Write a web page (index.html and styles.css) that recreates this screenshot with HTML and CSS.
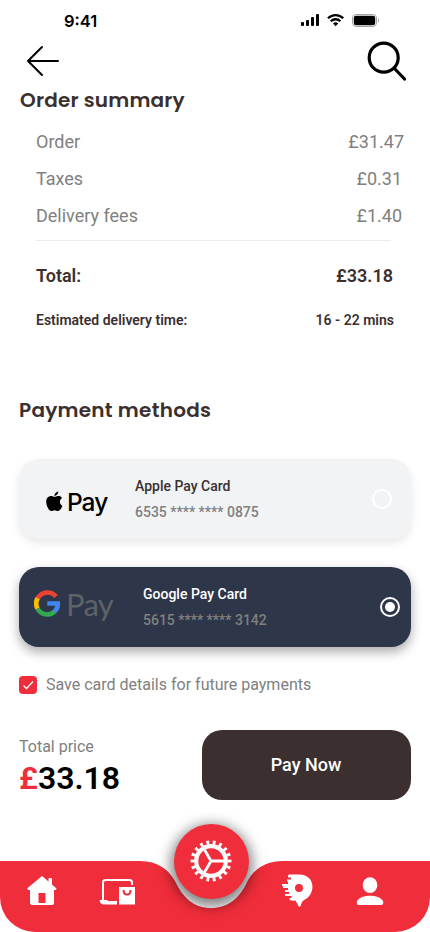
FILE: index.html
```html
<!DOCTYPE html>
<html lang="en">
<head>
<meta charset="utf-8">
<meta name="viewport" content="width=device-width, initial-scale=1">
<title>Order summary</title>
<link rel="stylesheet" href="styles.css">
</head>
<body>
<div class="screen">
  <header class="status">
    <span class="time">9:41</span>
    <svg class="status-icons" viewBox="0 0 79 14" width="79" height="14" aria-hidden="true">
      <rect x="1" y="9" width="3" height="4" rx="1"/><rect x="6" y="7" width="3" height="6" rx="1"/><rect x="11" y="4" width="3" height="9" rx="1"/><rect x="16" y="1" width="3" height="12" rx="1"/>
      <g fill="none" stroke="#000" stroke-width="2.3"><path d="M28 5.3a10.5 10.5 0 0 1 15.200 0"/><path d="M30.800 8.300a6.600 6.600 0 0 1 9.600 0"/></g>
      <path d="M33 10.600a3.700 3.700 0 0 1 5.200 0L35.600 13.200z"/>
      <rect x="52.500" y="1.500" width="24" height="12" rx="3.500" fill="none" stroke="#a5a5a5"/>
      <rect x="53.800" y="2.800" width="21.400" height="9.400" rx="2.300"/><path d="M78 5.500q1.300 .7 1.300 2t-1.300 2z" fill="#a5a5a5"/>
    </svg>
  </header>
  <nav class="toolbar">
    <svg width="34" height="32" viewBox="0 0 34 32" fill="none" stroke="#000" stroke-width="2" stroke-linecap="round" stroke-linejoin="round"><path d="M17 2 3 16l14 14M3 16h30"/></svg>
    <svg width="42" height="42" viewBox="0 0 42 42" fill="none" stroke="#000" stroke-width="3.200" stroke-linecap="round"><circle cx="17.700" cy="16.700" r="14.500"/><path d="m28.500 27.500 10 10.500"/></svg>
  </nav>
  <main>
    <h1 class="heading">Order summary</h1>
    <dl class="costs">
      <div class="row"><dt>Order</dt><dd class="order-cost">£31.47</dd></div>
      <div class="row"><dt>Taxes</dt><dd>£0.31</dd></div>
      <div class="row"><dt>Delivery fees</dt><dd>£1.40</dd></div>
    </dl>
    <div class="total"><span>Total:</span><span>£33.18</span></div>
    <div class="estimate"><span>Estimated delivery time:</span><span>16 - 22 mins</span></div>
    <h2 class="heading methods">Payment methods</h2>
    <section class="card apple">
      <div class="brand">
        <svg width="17" height="21" viewBox="0 0 17 21"><path d="M8.700 5.800C7.600 5.800 6.500 5 5 5 2.500 5 .2 7.200.2 10.700.2 14.300 2.700 20 5.200 20c1.200 0 1.900-.8 3.400-.8s2 .8 3.300.8c2 0 3.700-3 4.500-5.300-3.300-1.500-3.400-6-.3-7.800C14.900 5.300 13.500 5 12.400 5c-1.500 0-2.700.8-3.700.8zM8.400 4.900C8.300 2.600 10.200.6 12.300.4c.3 2.300-1.700 4.500-3.900 4.500z"/></svg>
        <span>Pay</span>
      </div>
      <div class="details"><strong>Apple Pay Card</strong><span>6535 **** **** 0875</span></div>
      <i class="radio"></i>
    </section>
    <section class="card google">
      <div class="brand">
        <svg width="26" height="27" viewBox="0 0 26 27" fill="none" stroke-width="4.700"><path stroke="#ea4335" d="M22 6.600A11 11 0 0 0 3.600 8.600"/><path stroke="#fbbc05" d="M3.600 8.200a11 11 0 0 0 0 10.500"/><path stroke="#34a853" d="M3.500 18.500a11 11 0 0 0 17.200 3.100"/><path stroke="#4285f4" d="M13.300 13.500h10.600q0 5.200-3.500 8.300"/></svg>
        <span>Pay</span>
      </div>
      <div class="details"><strong>Google Pay Card</strong><span>5615 **** **** 3142</span></div>
      <i class="radio checked"></i>
    </section>
    <div class="save"><span class="checkbox"><svg width="18" height="18" viewBox="0 0 18 18" fill="none" stroke="#fff" stroke-width="1.300"><path d="m4.500 9.500 3 3 6.500-7"/></svg></span><span>Save card details for future payments</span></div>
    <div class="checkout">
      <div class="price"><span>Total price</span><strong><b>£</b>33.18</strong></div>
      <button class="pay">Pay Now</button>
    </div>
  </main>
  <footer class="tabs">
    <svg class="bar" width="430" height="115" viewBox="0 0 430 115"><path fill="#f02d3a" d="M0 44H140C158 44 169 53 175 64 183 81 194 91 211 91 228 91 240 81 247 65 253 53 265 44 283 44H430v36a35 35 0 0 1-35 35H35A35 35 0 0 1 0 80z"/></svg>
    <div class="tab-icons">
      <svg class="home" width="30" height="30" viewBox="0 0 30 30"><path fill="#fff" fill-rule="evenodd" d="M15 0 0 12.500 1 14h2v13q0 2 2 2h20q2 0 2-2V14h2l.5-1.500L25 8.500V3q0-1-1-1h-1.500q-1 0-1 1v2.500zM11.500 17h7v10h-7z"/></svg>
      <svg class="shop" width="37" height="28" viewBox="0 0 37 28"><path d="M4 22V4.500Q4 2 6.500 2h24Q33 2 33 4.500V7" fill="none" stroke="#fff" stroke-width="2"/><path d="M.5 22H8l1 1h9v3.500H5Q1 26.500.5 22zM20 9H36v17.500H20z" fill="#fff"/><path d="M24.500 12q0 4.500 3.500 4.500t3.500-4.500" fill="none" stroke="#f02d3a" stroke-width="2"/></svg>
      <button class="settings" aria-label="Settings"><svg width="42" height="42" viewBox="-21 -21 42 42" fill="none" stroke="#fff"><circle r="14.800" stroke-width="4.200"/><circle r="18.500" stroke-width="4" pathLength="180" stroke-dasharray="4.400 5.600" stroke-dashoffset="2.200"/><path stroke-width="2.800" d="M0 0h15M0 0l-7.500-13M0 0l-7.500 13"/></svg></button>
      <svg class="delivery" width="31" height="34" viewBox="0 0 31 34"><path fill="#fff" fill-rule="evenodd" d="M7 .5h10c17 0 17 20 5 25.500-2 1-2.500 3.500-3.500 6q-1 2-2 0l-3-5.500q-3 .5-6-.5v-2h2v-2H3v-2h4v-2H3v-2h3v-2H1v-2H0v-2h6V7.500H5v-2h4v-2H6V1.500zM17 10a4 4 0 1 0 0 8 4 4 0 0 0 0-8z"/></svg>
      <svg class="profile" width="28" height="29" viewBox="0 0 28 29" fill="#fff"><ellipse cx="14" cy="8.200" rx="7.300" ry="7.900"/><path d="M1 24c4-7 22-7 26 0q1 4-2 4H3q-3 0-2-4z"/></svg>
    </div>
  </footer>
</div>
</body>
</html>
```
FILE: styles.css
```css
* { box-sizing: border-box; }
body { margin: 0; background: #fff; font-family: Roboto, sans-serif; color: #3b2f2f; }
.screen { width: 430px; height: 932px; display: flex; flex-direction: column; overflow: hidden; }
.status { height: 38px; padding: 10px 51px 0 64px; display: flex; justify-content: space-between; align-items: flex-start; color: #000; }
.time { font: 600 16.5px/22px Inter, sans-serif; }
.status-icons { margin-top: 3px; }
.toolbar { height: 49px; padding: 3px 22px 0 25px; display: flex; justify-content: space-between; }
.toolbar svg:first-child { margin-top: 4px; }
main { flex: 1; padding: 0 19px; }
.heading { margin: 0 0 0 1px; font: 600 20px/26px Poppins, Inter, sans-serif; letter-spacing: .2px; }
.costs { margin: 10px 0 0 17px; width: 355px; height: 118px; border-bottom: 1px solid #ebebeb; color: #808080; font-size: 18px; line-height: 37px; }
.row { display: flex; justify-content: space-between; margin-right: -11px; }
.row dd { margin: 0; }
.row .order-cost { margin-right: -2px; }
.total { display: flex; justify-content: space-between; margin: 24px 18px 0 17px; font-size: 18px; font-weight: 600; line-height: 22px; }
.estimate { display: flex; justify-content: space-between; margin: 24px 17px 0; font-size: 14px; font-weight: 600; line-height: 18px; }
.methods { margin: 68px 0 0; letter-spacing: .25px; }
.card { display: flex; align-items: center; height: 80px; border-radius: 20px; }
.apple { margin-top: 36px; background: #f2f3f5; box-shadow: 0 4px 10px #00000018; }
.google { margin-top: 28px; background: #2e364a; box-shadow: 0 5px 12px #00000055; }
.brand { width: 116px; padding: 5px 0 0 27px; display: flex; align-items: center; gap: 4px; font: 500 24.5px/30px Inter, sans-serif; letter-spacing: -1px; color: #000; }
.google .brand { width: 124px; padding: 0 0 7px 15px; gap: 6px; color: #5f6368; font: 400 31px/32px Lato, sans-serif; letter-spacing: -.7px; }
.details { display: flex; flex-direction: column; flex: 1; gap: 8px; font-size: 14px; line-height: 18px; font-weight: 500; }
.details strong { font-weight: 500; }
.details span { color: #808080; }
.google strong { color: #fff; }
.radio { width: 20px; height: 20px; border: 2px solid #fff; border-radius: 50%; margin-right: 19px; }
.checked { margin-right: 11px; padding: 3px; }
.checked::after { content: ""; display: block; width: 10px; height: 10px; border-radius: 50%; background: #fff; }
.save { margin-top: 27px; display: flex; align-items: center; gap: 9px; color: #808080; font-size: 16px; line-height: 22px; }
.checkbox { width: 18px; height: 18px; border-radius: 4px; background: #f02d3a; }
.checkbox svg { display: block; }
.checkout { display: flex; justify-content: space-between; margin-top: 34px; }
.price { display: flex; flex-direction: column; padding-top: 7px; font-size: 16px; line-height: 20px; color: #808080; }
.price strong { font-size: 32px; line-height: 43px; font-weight: 600; color: #000; }
.price b { color: #f02d3a; font-weight: 600; }
.pay { width: 209px; height: 70px; border: 0; border-radius: 20px; background: #3b2f2f; color: #fff; padding: 0 1px 1px 0; font: 500 18px Roboto, sans-serif; }
.tabs { height: 115px; display: grid; }
.bar, .tab-icons { grid-area: 1 / 1; }
.tab-icons { display: flex; align-items: flex-start; z-index: 1; }
.home { margin: 59px 0 0 27px; }
.shop { margin: 61px 0 0 42px; }
.settings { width: 75px; height: 75px; margin: 7px 0 0 38px; padding: 0 1px 1px 0; border: 0; border-radius: 50%; background: #f02d3a; box-shadow: 0 4px 14px 3px #00000088; display: grid; place-items: center; flex: none; }
.delivery { margin: 57px 0 0 33px; }
.profile { margin: 60px 0 0 43px; }
```
